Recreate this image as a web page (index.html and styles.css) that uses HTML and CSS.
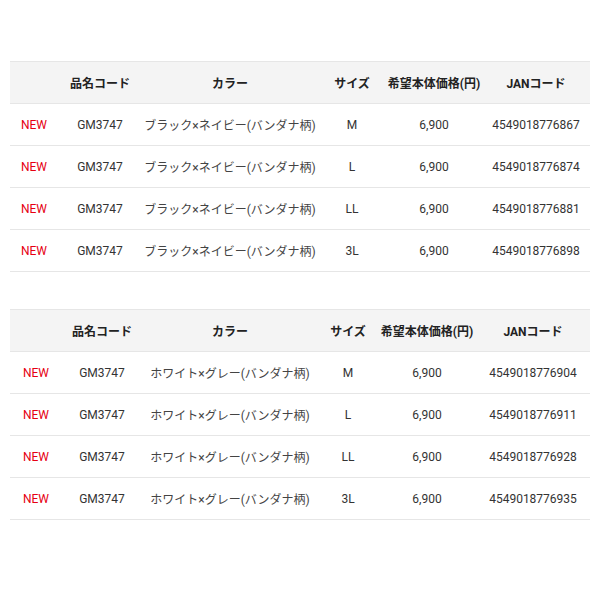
FILE: index.html
```html
<!DOCTYPE html>
<html lang="ja">
<head>
<meta charset="utf-8">
<link rel="stylesheet" href="styles.css">
</head>
<body>
<div class="page">
<table class="spec spec-a">
<colgroup><col class="c1"><col class="c2"><col class="c3"><col class="c4"><col class="c5"><col class="c6"></colgroup>
<thead><tr><th></th><th>品名コード</th><th>カラー</th><th>サイズ</th><th>希望本体価格(円)</th><th>JANコード</th></tr></thead>
<tbody>
<tr><td class="new">NEW</td><td>GM3747</td><td class="color">ブラック×ネイビー(バンダナ柄)</td><td>M</td><td>6,900</td><td>4549018776867</td></tr>
<tr><td class="new">NEW</td><td>GM3747</td><td class="color">ブラック×ネイビー(バンダナ柄)</td><td>L</td><td>6,900</td><td>4549018776874</td></tr>
<tr><td class="new">NEW</td><td>GM3747</td><td class="color">ブラック×ネイビー(バンダナ柄)</td><td>LL</td><td>6,900</td><td>4549018776881</td></tr>
<tr><td class="new">NEW</td><td>GM3747</td><td class="color">ブラック×ネイビー(バンダナ柄)</td><td>3L</td><td>6,900</td><td>4549018776898</td></tr>
</tbody>
</table>
<table class="spec spec-b">
<colgroup><col class="c1"><col class="c2"><col class="c3"><col class="c4"><col class="c5"><col class="c6"></colgroup>
<thead><tr><th></th><th>品名コード</th><th>カラー</th><th>サイズ</th><th>希望本体価格(円)</th><th>JANコード</th></tr></thead>
<tbody>
<tr><td class="new">NEW</td><td>GM3747</td><td class="color">ホワイト×グレー(バンダナ柄)</td><td>M</td><td>6,900</td><td>4549018776904</td></tr>
<tr><td class="new">NEW</td><td>GM3747</td><td class="color">ホワイト×グレー(バンダナ柄)</td><td>L</td><td>6,900</td><td>4549018776911</td></tr>
<tr><td class="new">NEW</td><td>GM3747</td><td class="color">ホワイト×グレー(バンダナ柄)</td><td>LL</td><td>6,900</td><td>4549018776928</td></tr>
<tr><td class="new">NEW</td><td>GM3747</td><td class="color">ホワイト×グレー(バンダナ柄)</td><td>3L</td><td>6,900</td><td>4549018776935</td></tr>
</tbody>
</table>
</div>
</body>
</html>
```
FILE: styles.css
```css
html, body { margin: 0; padding: 0; background: #fff; }
.page {
  padding: 61px 10px 0 10px;
  display: flex;
  flex-direction: column;
  gap: 37px;
  font-family: Roboto, "Noto Sans CJK JP", sans-serif;
  font-size: 12px;
  color: #333;
}
.spec {
  width: 580px;
  border-collapse: collapse;
  table-layout: fixed;
}
.spec-a .c1 { width: 48px; }
.spec-a .c2 { width: 84px; }
.spec-a .c3 { width: 176px; }
.spec-a .c4 { width: 68px; }
.spec-a .c5 { width: 96px; }
.spec-a .c6 { width: 108px; }
.spec-b .c1 { width: 52px; }
.spec-b .c2 { width: 80px; }
.spec-b .c3 { width: 176px; }
.spec-b .c4 { width: 60px; }
.spec-b .c5 { width: 98px; }
.spec-b .c6 { width: 114px; }
.spec th, .spec td {
  text-align: center;
  height: 42px;
  padding: 0;
  border-top: 1px solid #e6e6e6;
  border-bottom: 1px solid #e6e6e6;
  white-space: nowrap;
  vertical-align: middle;
  box-sizing: border-box;
}
.spec th {
  background: #f4f4f4;
  font-weight: bold;
  color: #222;
}
.spec td.new { color: #e60012; }
.spec td.color { color: #444; }
```
